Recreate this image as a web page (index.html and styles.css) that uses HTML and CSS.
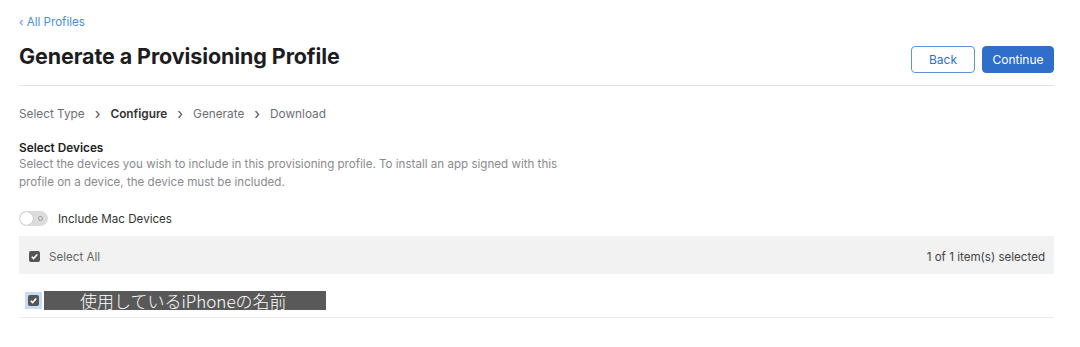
FILE: index.html
```html
<!DOCTYPE html>
<html lang="en">
<head>
  <meta charset="UTF-8">
  <title>Generate a Provisioning Profile</title>
  <link rel="stylesheet" href="styles.css">
</head>
<body>

<main class="page">
  <a class="back-link" href="#">&lsaquo; All Profiles</a>

  <div class="page-head">
    <h1 class="title">Generate a Provisioning Profile</h1>
    <div class="actions">
      <button class="btn btn-outline">Back</button>
      <button class="btn btn-primary">Continue</button>
    </div>
  </div>

  <nav class="steps">
    <span>Select Type</span>
    <span class="sep">&rsaquo;</span>
    <span class="current">Configure</span>
    <span class="sep">&rsaquo;</span>
    <span>Generate</span>
    <span class="sep">&rsaquo;</span>
    <span>Download</span>
  </nav>

  <section class="devices">
    <h2 class="label">Select Devices</h2>
    <p class="hint">Select the devices you wish to include in this provisioning profile. To install an app signed with this profile on a device, the device must be included.</p>

    <div class="toggle-row">
      <span class="toggle"><span class="knob"></span><span class="dot"></span></span>
      <span>Include Mac Devices</span>
    </div>

    <div class="list-head">
      <label class="check-label">
        <span class="check"><svg viewBox="0 0 12 12"><path d="M3 6.3 5 8.3 9 3.8" /></svg></span>
        Select All
      </label>
      <span class="count">1 of 1 item(s) selected</span>
    </div>

    <div class="device-row">
      <span class="focus"><span class="check"><svg viewBox="0 0 12 12"><path d="M3 6.3 5 8.3 9 3.8" /></svg></span></span>
      <span class="device-name">使用しているiPhoneの名前</span>
    </div>
  </section>
</main>

</body>
</html>
```

FILE: styles.css
```css
:root {
  --text: #1d1d1f;
  --muted: #6e6e73;
  --blue: #2f6fc9;
  --link: #4a8fe0;
  --line: #e3e3e3;
  --row-bg: #f2f2f2;
}
* { margin: 0; padding: 0; box-sizing: border-box; }
body {
  background: #fff;
  color: var(--text);
  font-family: Inter, "Noto Sans", sans-serif;
}
.page { padding: 14px 26px 0 19px; }

.back-link { display: block; width: max-content; color: var(--link); font-size: 11.6px; text-decoration: none; line-height: 16px; }

.page-head {
  display: flex;
  justify-content: space-between;
  align-items: flex-start;
  margin-top: 13px;
  padding-bottom: 12px;
  border-bottom: 1px solid var(--line);
}
.title { font-size: 21.5px; font-weight: 700; letter-spacing: -0.1px; line-height: 26px; }
.actions { display: flex; gap: 7px; margin-top: 3px; }
.btn {
  font-family: inherit;
  font-size: 12px;
  height: 27px;
  border-radius: 4px;
  cursor: pointer;
}
.btn-outline { width: 64px; background: #fff; color: var(--blue); border: 1px solid #5e93d8; }
.btn-primary { width: 72px; background: var(--blue); color: #fff; border: 1px solid var(--blue); }

.steps { display: flex; gap: 10px; margin-top: 19px; font-size: 11.8px; color: var(--muted); line-height: 18px; }
.steps .sep { font-size: 15px; line-height: 17px; color: #555; }
.steps .current { color: #333; font-weight: 600; }

.devices { margin-top: 17px; }
.label { font-size: 11.8px; font-weight: 600; color: #222; line-height: 16px; }
.hint { width: 545px; font-size: 11.6px; color: #8a8a8e; line-height: 18px; margin-top: -1px; }

.toggle-row { display: flex; align-items: center; gap: 10px; margin-top: 20px; font-size: 11.6px; color: #333; }
.toggle {
  position: relative;
  width: 29px;
  height: 15px;
  border-radius: 8px;
  background: #dcdcdc;
}
.toggle .knob {
  position: absolute;
  left: 1px; top: 1px;
  width: 13px; height: 13px;
  border-radius: 50%;
  background: #fff;
  box-shadow: 0 0 1px rgba(0,0,0,0.3);
}
.toggle .dot {
  position: absolute;
  right: 5px; top: 5px;
  width: 5px; height: 5px;
  border-radius: 50%;
  border: 1px solid #9a9a9a;
}

.list-head {
  display: flex;
  justify-content: space-between;
  align-items: center;
  height: 38px;
  margin-top: 10px;
  padding: 0 9px 0 10px;
  background: var(--row-bg);
  font-size: 11.6px;
  color: #666;
}
.count { color: #444; padding-top: 3px; }
.check-label { display: flex; align-items: center; gap: 9px; padding-top: 4px; }
.check {
  display: inline-flex;
  width: 11px; height: 11px;
  border-radius: 2px;
  background: #555;
}
.check svg { width: 11px; height: 11px; fill: none; stroke: #fff; stroke-width: 1.8; }

.device-row {
  display: flex;
  align-items: flex-start;
  gap: 2px;
  height: 44px;
  padding: 17px 0 0 6px;
  border-bottom: 1px solid #ececec;
}
.focus { display: inline-flex; padding: 3px; background: #c6dcf5; margin-top: 1px; }
.check-label .check { margin-top: -1px; }
.device-name {
  width: 282px;
  height: 19px;
  padding-left: 36px;
  background: #595959;
  color: #fff;
  font-family: "Noto Sans CJK JP", sans-serif;
  font-size: 17px;
  font-weight: 300;
  line-height: 19px;
}
```
